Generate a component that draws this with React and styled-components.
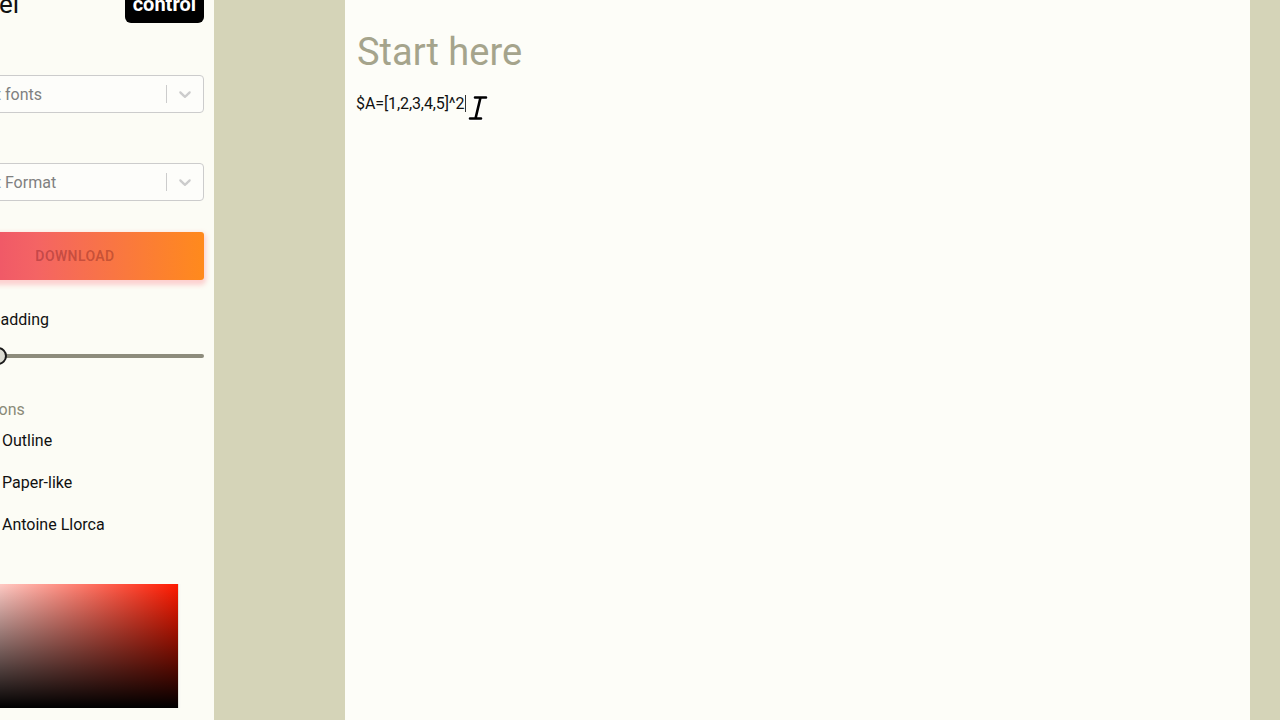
import styled, { createGlobalStyle } from "styled-components";
import { useLayoutEffect, useRef } from "react";

const GlobalStyle = createGlobalStyle`
  body {
    margin: 0;
    font-family: Roboto, "Liberation Sans", sans-serif;
    background: #fcfcf6;
    overflow: hidden;
  }
`;

const Page = styled.div`
  display: flex;
  width: 100%;
  height: 100vh;
`;

const Sidebar = styled.aside`
  width: 214px;
  flex: none;
  height: 100vh;
  overflow: hidden;
  background: #fcfcf5;
`;

const Inner = styled.div`
  width: 258px;
  padding: 16px 10px 40px 16px;
`;

const Header = styled.div`
  display: flex;
  align-items: center;
  justify-content: space-between;
`;

const Title = styled.h2`
  margin: 0;
  font-size: 26px;
  font-weight: 400;
  color: #111;
`;

const KeyButton = styled.button`
  border: none;
  background: #000;
  color: #fff;
  font-family: Roboto, sans-serif;
  font-size: 20px;
  font-weight: 700;
  line-height: 24px;
  padding: 7px 8px;
  border-radius: 6px;
`;

const Field = styled.div`
  margin-top: ${({ gap }) => gap}px;
`;

const Label = styled.label`
  display: block;
  font-size: 16px;
  line-height: 19px;
  margin-bottom: ${({ below }) => below ?? 7}px;
  color: ${({ muted }) => (muted ? "#8a8a78" : "#111")};
`;

const Select = styled.div`
  display: flex;
  align-items: center;
  height: 38px;
  box-sizing: border-box;
  border: 1px solid #cccccc;
  border-radius: 4px;
  background: #fdfdfa;
`;

const Placeholder = styled.span`
  flex: 1;
  padding: 0 10px;
  font-size: 16px;
  color: #808080;
`;

const Separator = styled.span`
  width: 1px;
  height: 18px;
  background: #cccccc;
`;

const Indicator = styled.span`
  display: flex;
  padding: 8px;
  color: #cccccc;
`;

const Download = styled.button`
  display: block;
  width: 100%;
  height: 48px;
  margin-top: 31px;
  border: none;
  border-radius: 3px;
  background: linear-gradient(90deg, #ea4a6c 0%, #f46464 35%, #ff8a1c 100%);
  box-shadow: 0 3px 5px 2px rgba(255, 105, 120, 0.3);
  color: rgba(80, 0, 10, 0.3);
  font-family: Roboto, sans-serif;
  font-size: 14px;
  font-weight: 600;
  letter-spacing: 0.4px;
  text-transform: uppercase;
`;

const Slider = styled.div`
  position: relative;
  height: 20px;
  display: flex;
  align-items: center;
`;

const Track = styled.div`
  width: 100%;
  height: 4px;
  border-radius: 2px;
  background: #8d8c7c;
`;

const Thumb = styled.span`
  position: absolute;
  top: 1px;
  width: 14px;
  height: 14px;
  margin-left: -9px;
  border: 2px solid #1a1a1a;
  border-radius: 50%;
  background: #dcdcd2;
`;

const CheckList = styled.div`
  display: flex;
  flex-direction: column;
`;

const CheckRow = styled.label`
  display: flex;
  align-items: center;
  gap: 12px;
  height: 42px;
  padding-left: 26px;
  font-size: 16px;
  color: #111;
`;

const Box = styled.span`
  width: 14px;
  height: 14px;
  border: 2px solid #555;
  border-radius: 2px;
`;

const Picker = styled.div`
  margin-top: 39px;
  width: 232px;
  height: 124px;
  background: linear-gradient(to bottom, transparent, #000),
    linear-gradient(to right, #fff, #ff1a00);
  box-shadow: 1px 0 0 #e4e4dc, 3px 0 0 #fafaf4;
`;

const HueBar = styled.div`
  margin-top: 12px;
  width: 232px;
  height: 12px;
  background: linear-gradient(
    to right,
    #f00,
    #ff0,
    #0f0,
    #0ff,
    #00f,
    #f0f,
    #f00
  );
`;

const Workspace = styled.main`
  flex: 1;
  display: flex;
  padding: 0 30px 0 131px;
  background: #d5d4b8;
`;

const Editor = styled.section`
  flex: 1;
  background: #fdfdf8;
  padding: 30px 11px;
`;

const Heading = styled.h1`
  margin: 0;
  padding-left: 1px;
  font-size: 38px;
  font-weight: 400;
  line-height: 44px;
  color: #a5a48c;
`;

const Line = styled.p`
  margin: 20px 0 0;
  font-size: 16px;
  line-height: 19px;
  color: #111;
  letter-spacing: -0.1px;
`;

const Caret = styled.span`
  position: relative;
  display: inline-block;
  width: 1px;
  height: 17px;
  margin-left: 1px;
  vertical-align: -3px;
  background: #333;
`;

const Pointer = styled.svg`
  position: absolute;
  left: 3px;
  top: 0;
`;

const Chevron = () => (
  <svg width="20" height="20" viewBox="0 0 20 20" fill="currentColor">
    <path d="M4.516 7.548c0.436-0.446 1.043-0.481 1.576 0l3.908 3.747 3.908-3.747c0.533-0.481 1.141-0.446 1.574 0 0.436 0.445 0.408 1.197 0 1.615-0.406 0.418-4.695 4.502-4.695 4.502-0.217 0.223-0.502 0.335-0.787 0.335s-0.57-0.112-0.789-0.335c0 0-4.287-4.084-4.695-4.502s-0.436-1.17 0-1.615z" />
  </svg>
);

function FakeSelect({ placeholder }) {
  return (
    <Select>
      <Placeholder>{placeholder}</Placeholder>
      <Separator />
      <Indicator>
        <Chevron />
      </Indicator>
    </Select>
  );
}

const options = ["Outline", "Paper-like", "Antoine Llorca"];

export default function App() {
  const sideRef = useRef(null);

  useLayoutEffect(() => {
    if (sideRef.current) {
      sideRef.current.scrollLeft = 70;
      sideRef.current.scrollTop = 31;
    }
  }, []);

  return (
    <Page>
      <GlobalStyle />
      <Sidebar ref={sideRef}>
        <Inner>
          <Header>
            <Title>Kernel</Title>
            <KeyButton>control</KeyButton>
          </Header>
          <Field gap={26}>
            <Label>Font</Label>
            <FakeSelect placeholder="Select fonts" />
          </Field>
          <Field gap={24}>
            <Label>Format</Label>
            <FakeSelect placeholder="Select Format" />
          </Field>
          <Download disabled>Download</Download>
          <Field gap={30}>
            <Label below={17}>Paper padding</Label>
            <Slider>
              <Track />
              <Thumb style={{ left: `${(52 / 258) * 100}%` }} />
            </Slider>
          </Field>
          <Field gap={34}>
            <Label muted below={0}>
              Ink options
            </Label>
            <CheckList>
              {options.map((o) => (
                <CheckRow key={o}>
                  <Box />
                  {o}
                </CheckRow>
              ))}
            </CheckList>
          </Field>
          <Picker />
          <HueBar />
        </Inner>
      </Sidebar>
      <Workspace>
        <Editor>
          <Heading>Start here</Heading>
          <Line>
            $A=[1,2,3,4,5]^2
            <Caret>
              <Pointer width="20" height="26" viewBox="0 0 20 26">
                <path
                  d="M7 2.5h11M12.5 2.5L7.5 23.5M2 23.5h11"
                  stroke="#fff"
                  strokeWidth="5"
                  strokeLinecap="round"
                  fill="none"
                />
                <path
                  d="M7 2.5h11M12.5 2.5L7.5 23.5M2 23.5h11"
                  stroke="#000"
                  strokeWidth="2.6"
                  strokeLinecap="round"
                  fill="none"
                />
              </Pointer>
            </Caret>
          </Line>
        </Editor>
      </Workspace>
    </Page>
  );
}
